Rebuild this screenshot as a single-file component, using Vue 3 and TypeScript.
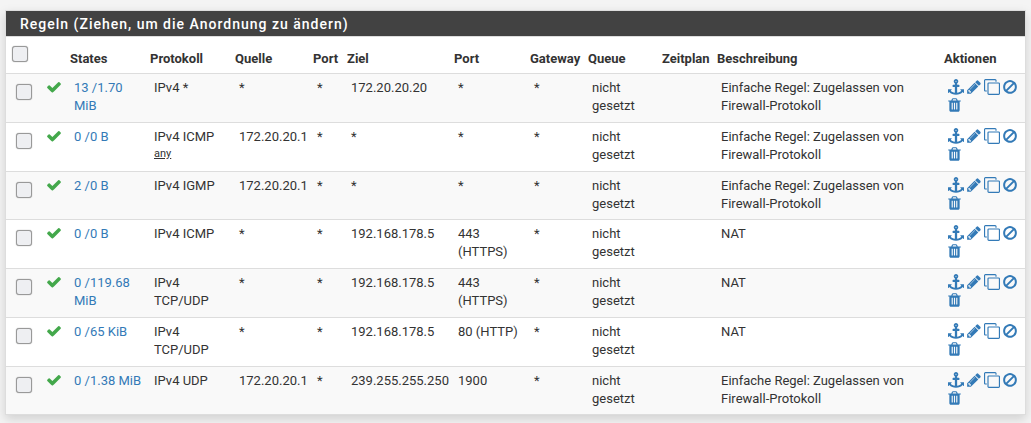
<script setup lang="ts">
interface Rule {
  states: string
  protocol: string
  note?: string
  source: string
  target: string
  targetPort: string
  description: string
}

interface Action {
  label: string
  viewBox: string
  narrow?: boolean
  path: string
}

const auto = 'Einfache Regel: Zugelassen von Firewall-Protokoll'

const headings = ['States', 'Protokoll', 'Quelle', 'Port', 'Ziel', 'Port', 'Gateway', 'Queue', 'Zeitplan', 'Beschreibung', 'Aktionen']

const columns = ['select', 'status', 'states', 'protocol', 'source', 'port', 'target', 'target-port', 'gateway', 'queue', 'schedule', 'description', 'actions-col']

const rules: Rule[] = [
  { states: '13 /1.70 MiB', protocol: 'IPv4 *', source: '*', target: '172.20.20.20', targetPort: '*', description: auto },
  { states: '0 /0 B', protocol: 'IPv4 ICMP', note: 'any', source: '172.20.20.1', target: '*', targetPort: '*', description: auto },
  { states: '2 /0 B', protocol: 'IPv4 IGMP', source: '172.20.20.1', target: '*', targetPort: '*', description: auto },
  { states: '0 /0 B', protocol: 'IPv4 ICMP', source: '*', target: '192.168.178.5', targetPort: '443 (HTTPS)', description: 'NAT' },
  { states: '0 /119.68 MiB', protocol: 'IPv4 TCP/UDP', source: '*', target: '192.168.178.5', targetPort: '443 (HTTPS)', description: 'NAT' },
  { states: '0 /65 KiB', protocol: 'IPv4 TCP/UDP', source: '*', target: '192.168.178.5', targetPort: '80 (HTTP)', description: 'NAT' },
  { states: '0 /1.38 MiB', protocol: 'IPv4 UDP', source: '172.20.20.1', target: '239.255.255.250', targetPort: '1900', description: auto },
]

const checkPath = 'M1671 566q0 40-28 68l-724 724-136 136q-28 28-68 28t-68-28l-136-136-362-362q-28-28-28-68t28-68l136-136q28-28 68-28t68 28l294 295 656-657q28-28 68-28t68 28l136 136q28 28 28 68z'

const actions: Action[] = [
  {
    label: 'Verschieben',
    viewBox: '0 0 1792 1792',
    path: 'M960 256q0-26-19-45t-45-19-45 19-19 45 19 45 45 19 45-19 19-45zm832 928v352q0 22-20 30-8 2-12 2-12 0-23-9l-93-93q-119 143-318.500 226.500t-429.500 83.500-429.500-83.500-318.500-226.500l-93 93q-9 9-23 9-4 0-12-2-20-8-20-30v-352q0-14 9-23t23-9h352q22 0 30 20 8 19-7 35l-100 100q67 91 189.500 153.500t271.500 82.500v-647h-192q-26 0-45-19t-19-45v-128q0-26 19-45t45-19h192v-163q-58-34-93-92.500t-35-128.500q0-106 75-181t181-75 181 75 75 181q0 70-35 128.500t-93 92.500v163h192q26 0 45 19t19 45v128q0 26-19 45t-45 19h-192v647q149-20 271.500-82.500t189.500-153.500l-100-100q-15-16-7-35 8-20 30-20h352q14 0 23 9t9 23z',
  },
  {
    label: 'Bearbeiten',
    viewBox: '0 0 1792 1792',
    path: 'M491 1536l91-91-235-235-91 91v107h128v128h107zm523-928q0-22-22-22-10 0-17 7l-542 542q-7 7-7 17 0 22 22 22 10 0 17-7l542-542q7-7 7-17zm-54-192l416 416-832 832h-416v-416zm683 96q0 53-37 90l-166 166-416-416 166-165q36-38 90-38 53 0 91 38l235 234q37 39 37 91z',
  },
  {
    label: 'Kopieren',
    viewBox: '0 0 1792 1792',
    path: 'M1664 1632v-1088q0-13-9.500-22.500t-22.500-9.500h-1088q-13 0-22.500 9.500t-9.500 22.500v1088q0 13 9.500 22.500t22.500 9.500h1088q13 0 22.500-9.500t9.500-22.500zm128-1088v1088q0 66-47 113t-113 47h-1088q-66 0-113-47t-47-113v-1088q0-66 47-113t113-47h1088q66 0 113 47t47 113zm-384-384v160h-128v-160q0-13-9.500-22.500t-22.500-9.500h-1088q-13 0-22.500 9.500t-9.500 22.500v1088q0 13 9.500 22.500t22.500 9.500h160v128h-160q-66 0-113-47t-47-113v-1088q0-66 47-113t113-47h1088q66 0 113 47t47 113z',
  },
  {
    label: 'Deaktivieren',
    viewBox: '0 0 1792 1792',
    path: 'M1440 893q0-161-87-295l-754 753q137 89 297 89 111 0 211.500-43.500t173.500-116.500 116-174.500 43-212.500zm-999 299l755-754q-135-91-300-91-148 0-273 73t-198 199-73 274q0 162 89 299zm1223-299q0 157-61 300t-163.500 246-245 164-298.500 61-298.500-61-245-164-163.500-246-61-300 61-299.500 163.500-245.500 245-164 298.500-61 298.500 61 245 164 163.500 245.500 61 299.500z',
  },
  {
    label: 'Löschen',
    viewBox: '192 0 1408 1792',
    narrow: true,
    path: 'M704 1376v-704q0-14-9-23t-23-9h-64q-14 0-23 9t-9 23v704q0 14 9 23t23 9h64q14 0 23-9t9-23zm256 0v-704q0-14-9-23t-23-9h-64q-14 0-23 9t-9 23v704q0 14 9 23t23 9h64q14 0 23-9t9-23zm256 0v-704q0-14-9-23t-23-9h-64q-14 0-23 9t-9 23v704q0 14 9 23t23 9h64q14 0 23-9t9-23zm-544-992h448l-48-117q-7-9-17-11h-317q-10 2-17 11zm928 32v64q0 14-9 23t-23 9h-96v948q0 83-47 143.500t-113 60.500h-832q-66 0-113-58.500t-47-141.500v-952h-96q-14 0-23-9t-9-23v-64q0-14 9-23t23-9h309l70-167q15-37 54-63t79-26h320q40 0 79 26t54 63l70 167h309q14 0 23 9t9 23z',
  },
]
</script>

<template>
  <section class="panel">
    <h2 class="title">Regeln (Ziehen, um die Anordnung zu ändern)</h2>
    <table class="rules">
      <colgroup>
        <col v-for="name in columns" :key="name" :class="name">
      </colgroup>
      <thead>
        <tr>
          <th class="pick"><input type="checkbox" class="box" aria-label="Alle auswählen"></th>
          <th></th>
          <th v-for="(heading, i) in headings" :key="i" scope="col">{{ heading }}</th>
        </tr>
      </thead>
      <tbody>
        <tr v-for="(rule, i) in rules" :key="i">
          <td class="pick"><input type="checkbox" class="box" :aria-label="`Regel ${i + 1} auswählen`"></td>
          <td class="state">
            <svg class="check" viewBox="0 0 1792 1792" role="img" aria-label="Erlaubt"><path :d="checkPath" /></svg>
          </td>
          <td><a href="#">{{ rule.states }}</a></td>
          <td>{{ rule.protocol }}<a v-if="rule.note" href="#" class="note">{{ rule.note }}</a></td>
          <td>{{ rule.source }}</td>
          <td>*</td>
          <td>{{ rule.target }}</td>
          <td>{{ rule.targetPort }}</td>
          <td>*</td>
          <td>nicht gesetzt</td>
          <td></td>
          <td><span class="text">{{ rule.description }}</span></td>
          <td>
            <div class="actions">
              <a v-for="action in actions" :key="action.label" href="#" :aria-label="action.label">
                <svg class="icon" :class="{ narrow: action.narrow }" :viewBox="action.viewBox" aria-hidden="true"><path :d="action.path" /></svg>
              </a>
            </div>
          </td>
        </tr>
      </tbody>
    </table>
  </section>
</template>

<style>
body {
  background: #f4f4f4;
}
</style>

<style scoped>
.panel {
  margin: 10px 5px 8px;
  border: 1px solid #ddd;
  background: #fff;
  box-shadow: 0 4px 10px rgba(0, 0, 0, 0.15);
  color: #333;
  font: 13px/18px Roboto, "Liberation Sans", sans-serif;
}

.title {
  margin: 0;
  padding: 4px 14px 3px;
  background: #424242;
  border-bottom: 1px solid #ddd;
  color: #fff;
  font-size: 14px;
  font-weight: 500;
  letter-spacing: 1px;
}

.rules {
  width: 100%;
  table-layout: fixed;
  border-spacing: 0;
}

.select { width: 34px; }
.status { width: 26px; }
.states { width: 80px; }
.protocol { width: 85px; }
.source { width: 78px; }
.port { width: 34px; }
.target { width: 107px; }
.target-port { width: 76px; }
.gateway { width: 58px; }
.queue { width: 74px; }
.schedule { width: 55px; }
.actions-col { width: 85px; }

th {
  height: 36px;
  box-sizing: border-box;
  padding: 4px 4px 5px;
  text-align: left;
  vertical-align: bottom;
  font-weight: 700;
  white-space: nowrap;
}

td {
  height: 49px;
  box-sizing: border-box;
  padding: 5px 0 5px 8px;
  border-top: 1px solid #ddd;
  vertical-align: top;
}

tr:nth-child(4n + 3) td {
  height: 48px;
}

tbody tr:nth-child(odd) {
  background: #f9f9f9;
}

.box {
  display: block;
  width: 16px;
  height: 16px;
  margin: 0;
  appearance: none;
  background: #eeeff2;
  border: 1px solid #999;
  border-radius: 3px;
  box-shadow: 0 0 1px #888;
}

th.pick {
  padding: 9px 6px;
  vertical-align: top;
}

td.pick {
  padding: 10px 10px 0;
}

td.state {
  padding: 5px 0 0 6px;
}

.check {
  display: block;
  width: 16px;
  height: 16px;
  fill: #43a84b;
}

a {
  color: #337ab7;
  text-decoration: none;
}

.note {
  display: block;
  color: #333;
  font-size: 11px;
  line-height: 16px;
  text-decoration: underline;
}

.text {
  display: block;
  max-width: 190px;
}

.actions {
  display: flex;
  flex-wrap: wrap;
  gap: 2px;
}

.icon {
  display: block;
  width: 16px;
  height: 16px;
  fill: #337ab7;
}

.narrow {
  width: 13px;
}
</style>
